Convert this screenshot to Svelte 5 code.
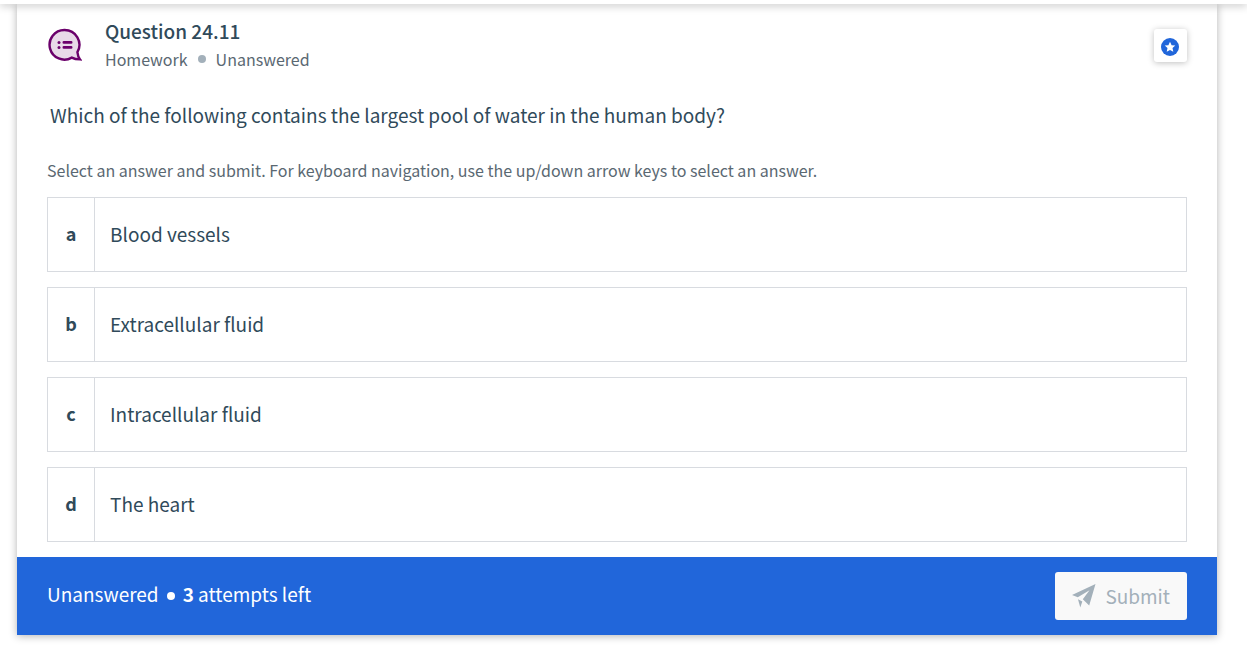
<script>
  const question = {
    number: '24.11',
    type: 'Homework',
    status: 'Unanswered',
    text: 'Which of the following contains the largest pool of water in the human body?',
    attemptsLeft: 3
  };

  const answers = [
    { letter: 'a', text: 'Blood vessels' },
    { letter: 'b', text: 'Extracellular fluid' },
    { letter: 'c', text: 'Intracellular fluid' },
    { letter: 'd', text: 'The heart' }
  ];

  let selected = $state('');
</script>

<div class="page">
  <div class="top-bar"></div>

  <main class="card">
    <div class="card-body">
      <header class="card-header">
        <svg class="question-icon" viewBox="0 0 34 34" aria-hidden="true">
          <path
            d="M16.5 2 A14.8 14.8 0 1 0 23.8 29.6 Q27 31.3 32 31.4 Q29.8 28.6 29.4 24.2 A14.8 14.8 0 0 0 16.5 2 Z"
            fill="#e8d9e8" stroke="#6b006b" stroke-width="2.4" />
          <path d="M15.8 14.4h7.4M15.8 19.4h7.4" stroke="#6b006b" stroke-width="2.6" stroke-linecap="round" />
          <circle cx="11" cy="14.4" r="1.5" fill="#6b006b" />
          <circle cx="11" cy="19.4" r="1.5" fill="#6b006b" />
        </svg>

        <div class="heading">
          <h1>Question {question.number}</h1>
          <p class="meta">
            <span>{question.type}</span>
            <span class="dot"></span>
            <span>{question.status}</span>
          </p>
        </div>

        <button class="btn-star" aria-label="Bookmark question">
          <svg viewBox="0 0 18 18" aria-hidden="true">
            <circle cx="9" cy="9" r="9" fill="#2166da" />
            <path d="M9 3.8l1.6 3.4 3.7.4-2.8 2.5.8 3.7L9 12l-3.3 1.8.8-3.7-2.8-2.5 3.7-.4z" fill="#fff" />
          </svg>
        </button>
      </header>

      <p class="question-text">{question.text}</p>

      <form id="answer-form" onsubmit={(e) => e.preventDefault()}>
        <fieldset>
          <legend>
            Select an answer and submit. For keyboard navigation, use the up/down arrow keys to select an answer.
          </legend>
          <div class="answers">
            {#each answers as answer}
              <label class="answer" class:selected={selected === answer.letter}>
                <input type="radio" name="answer" value={answer.letter} bind:group={selected} />
                <span class="letter">{answer.letter}</span>
                <span class="answer-text">{answer.text}</span>
              </label>
            {/each}
          </div>
        </fieldset>
      </form>
    </div>

    <footer class="card-footer">
      <p class="attempts">
        <span>{question.status}</span>
        <span class="dot"></span>
        <span><strong>{question.attemptsLeft}</strong> attempts left</span>
      </p>
      <button class="btn-submit" type="submit" form="answer-form" disabled={!selected}>
        <svg viewBox="0 0 24 24" aria-hidden="true">
          <path d="M23.5 0L0 11l5.8 2.2L17.5 6.2 10.8 15.2 17.2 21.6z" fill="currentColor" />
          <path d="M6 15.2l4.3 2.2L8.3 23.6z" fill="currentColor" />
        </svg>
        Submit
      </button>
    </footer>
  </main>
</div>

<style>
  :global(body) {
    background: #fff;
  }

  .page {
    font-family: 'Noto Sans CJK SC', 'Noto Sans', sans-serif;
    color: #304a5a;
    padding-bottom: 21px;
    overflow: hidden;
  }

  .top-bar {
    position: relative;
    height: 4px;
    background: #fff;
    box-shadow: 0 1px 8px rgba(0, 0, 0, 0.35);
  }

  .card {
    margin: 0 30px 0 17px;
    background: #fff;
    box-shadow: 0 1px 8px rgba(0, 0, 0, 0.3);
  }

  .card-body {
    padding: 13px 30px 15px;
  }

  .card-header {
    display: flex;
    align-items: flex-start;
  }

  .question-icon {
    width: 34px;
    height: 34px;
    margin: 11px 23px 0 1px;
  }

  .heading {
    flex: 1;
  }

  h1,
  p {
    margin: 0;
  }

  h1 {
    font-size: 19px;
    line-height: 28px;
    font-weight: 500;
  }

  .meta {
    display: flex;
    align-items: center;
    gap: 10px;
    font-size: 16px;
    line-height: 28px;
    color: #5a6872;
  }

  .dot {
    width: 8px;
    height: 8px;
    border-radius: 50%;
    background: #a3b0ba;
  }

  .btn-star {
    display: flex;
    align-items: center;
    justify-content: center;
    width: 33px;
    height: 33px;
    margin-top: 12px;
    padding: 2px 1px 0 0;
    border: none;
    border-radius: 3px;
    background: #fff;
    box-shadow: 0 1px 6px rgba(0, 0, 0, 0.25);
    cursor: pointer;
  }

  .btn-star svg {
    width: 18px;
    height: 18px;
  }

  .question-text {
    margin: 28px 3px 0;
    font-size: 19px;
    line-height: 28px;
  }

  fieldset {
    margin: 0;
    padding: 0;
    border: none;
  }

  legend {
    padding: 28px 0 14px;
    font-size: 16px;
    line-height: 26px;
    color: #5a6872;
  }

  .answers {
    display: flex;
    flex-direction: column;
    gap: 15px;
  }

  .answer {
    position: relative;
    display: flex;
    align-items: stretch;
    border: 1px solid #d8dbe0;
    font-size: 19px;
    line-height: 27px;
    cursor: pointer;
  }

  .answer input {
    position: absolute;
    opacity: 0;
  }

  .answer.selected {
    border-color: #2166da;
  }

  .letter {
    width: 46px;
    padding: 22px 0 24px;
    border-right: 1px solid #d8dbe0;
    font-size: 18px;
    font-weight: 700;
    text-align: center;
  }

  .answer-text {
    flex: 1;
    padding: 22px 15px 24px;
  }

  .card-footer {
    display: flex;
    align-items: center;
    justify-content: space-between;
    padding: 15px 30px;
    background: #2166da;
    color: #fff;
  }

  .attempts {
    display: flex;
    align-items: center;
    gap: 8px;
    padding-bottom: 4px;
    font-size: 19px;
    line-height: 28px;
  }

  .attempts .dot {
    margin-top: 4px;
    background: #fff;
  }

  .btn-submit {
    display: flex;
    align-items: center;
    gap: 9px;
    height: 48px;
    padding: 0 17px 1px;
    border: none;
    border-radius: 3px;
    background: #f9f9f9;
    color: #2166da;
    font-family: inherit;
    font-size: 19px;
    cursor: pointer;
  }

  .btn-submit:disabled {
    color: #a3b0ba;
    cursor: default;
  }

  .btn-submit svg {
    width: 24px;
    height: 24px;
  }
</style>
